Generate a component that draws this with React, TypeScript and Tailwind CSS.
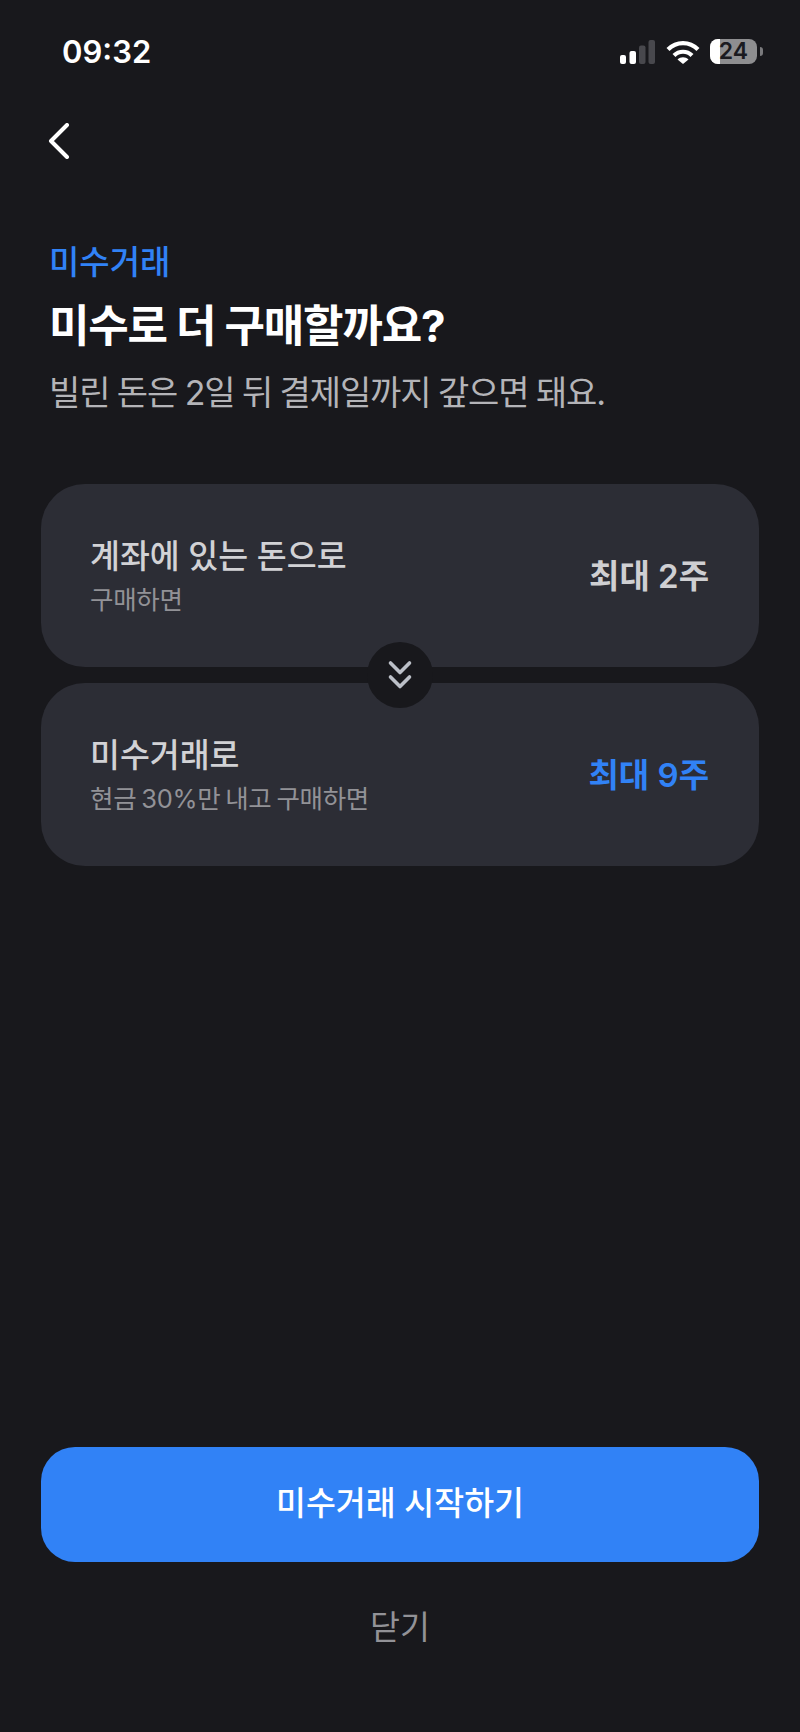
const font = { fontFamily: 'Inter, "Noto Sans CJK KR", sans-serif' };

function Signal() {
  return (
    <svg width="35" height="24" viewBox="0 0 35 24" className="block">
      <rect x="0" y="15" width="6" height="9" rx="2" fill="#fff" />
      <rect x="9.5" y="11" width="6.5" height="13" rx="2" fill="#fff" />
      <rect x="19" y="5.5" width="6.5" height="18.5" rx="2" fill="#48484d" />
      <rect x="28.5" y="0" width="6.5" height="24" rx="2" fill="#48484d" />
    </svg>
  );
}

function Wifi() {
  return (
    <svg width="34" height="24" viewBox="0 0 34 24" className="block" fill="none" stroke="#fff" strokeWidth="4.2">
      <path d="M2 9.5C10.5 1 23.5 1 32 9.5" />
      <path d="M8 15.5C13 10.5 21 10.5 26 15.5" />
      <path d="M17 24L11.5 19.5C14.5 16.6 19.5 16.6 22.5 19.5Z" fill="#fff" stroke="none" />
    </svg>
  );
}

function Battery() {
  return (
    <div className="flex items-center gap-[3px]">
      <div className="relative flex h-[25px] w-[47px] items-center justify-center rounded-[8px] bg-[#8e8e90]">
        <div className="absolute inset-y-0 left-0 w-[10px] rounded-l-[8px] bg-white" />
        <span className="relative text-[23px] font-semibold leading-[25px] text-[#1a1a1f]">24</span>
      </div>
      <div className="h-[9px] w-[3px] rounded-r-full bg-[#7a7a7d]" />
    </div>
  );
}

function Card({ title, sub, value, blue }: { title: string; sub: string; value: string; blue?: boolean }) {
  return (
    <div className="flex h-[183px] items-center justify-between rounded-[44px] bg-[#2c2d35] pl-[49px] pr-[50px]">
      <div className="flex flex-col gap-[4px] pt-[2px]">
        <div className="text-[32.5px] font-medium leading-[42px] text-[#d2d2d5]">{title}</div>
        <div className="text-[25.5px] leading-[36px] tracking-[-0.3px] text-[#929297] [word-spacing:-2px]">{sub}</div>
      </div>
      <div className={`text-[33px] font-semibold leading-[44px] ${blue ? 'text-[#3182f6]' : 'text-[#cfcfd2]'}`}>{value}</div>
    </div>
  );
}

export default function App() {
  return (
    <div style={font} className="flex h-[1732px] w-[800px] flex-col overflow-hidden bg-[#18181c]">
      <div className="flex h-[64px] items-end justify-between pl-[62px] pr-[37px] pt-[39px]">
        <span className="text-[31px] font-semibold leading-[24px] text-white">09:32</span>
        <div className="flex items-center">
          <Signal />
          <div className="ml-[11px] mr-[10px]"><Wifi /></div>
          <Battery />
        </div>
      </div>

      <div className="pl-[48px] pt-[59px]">
        <svg width="22" height="36" viewBox="0 0 22 36" className="block" fill="none" stroke="#fff" strokeWidth="4" strokeLinecap="round" strokeLinejoin="round">
          <path d="M19 2L3 18L19 34" />
        </svg>
      </div>

      <div className="pl-[49px] pt-[80px]">
        <div className="text-[33px] font-medium leading-[46px] text-[#3182f6]">미수거래</div>
        <div className="mt-[11px] text-[44px] font-bold leading-[60px] tracking-[-1.2px] text-white">미수로 더 구매할까요?</div>
        <div className="mt-[13px] text-[34px] leading-[48px] tracking-[-1.1px] text-[#b4b4b8] [word-spacing:-1px]">빌린 돈은 2일 뒤 결제일까지 갚으면 돼요.</div>
      </div>

      <div className="relative mx-[41px] mt-[67px] flex flex-col gap-[16px]">
        <Card title="계좌에 있는 돈으로" sub="구매하면" value="최대 2주" />
        <Card title="미수거래로" sub="현금 30%만 내고 구매하면" value="최대 9주" blue />
        <div className="absolute left-1/2 top-[158px] flex h-[66px] w-[66px] -translate-x-1/2 items-center justify-center rounded-full bg-[#18181c]">
          <svg width="26" height="30" viewBox="0 0 26 30" className="block" fill="none" stroke="#bcc0c8" strokeWidth="3.6" strokeLinecap="round" strokeLinejoin="round">
            <path d="M3.5 3L13 12.5L22.5 3" />
            <path d="M3.5 17L13 26.5L22.5 17" />
          </svg>
        </div>
      </div>

      <div className="flex-1" />

      <div className="mx-[41px] flex h-[115px] items-center justify-center rounded-[34px] bg-[#3182f6] text-[32.5px] font-medium text-white">
        미수거래 시작하기
      </div>
      <div className="flex h-[170px] items-start justify-center pt-[43px] text-[32.5px] leading-[46px] text-[#929297]">닫기</div>
    </div>
  );
}
